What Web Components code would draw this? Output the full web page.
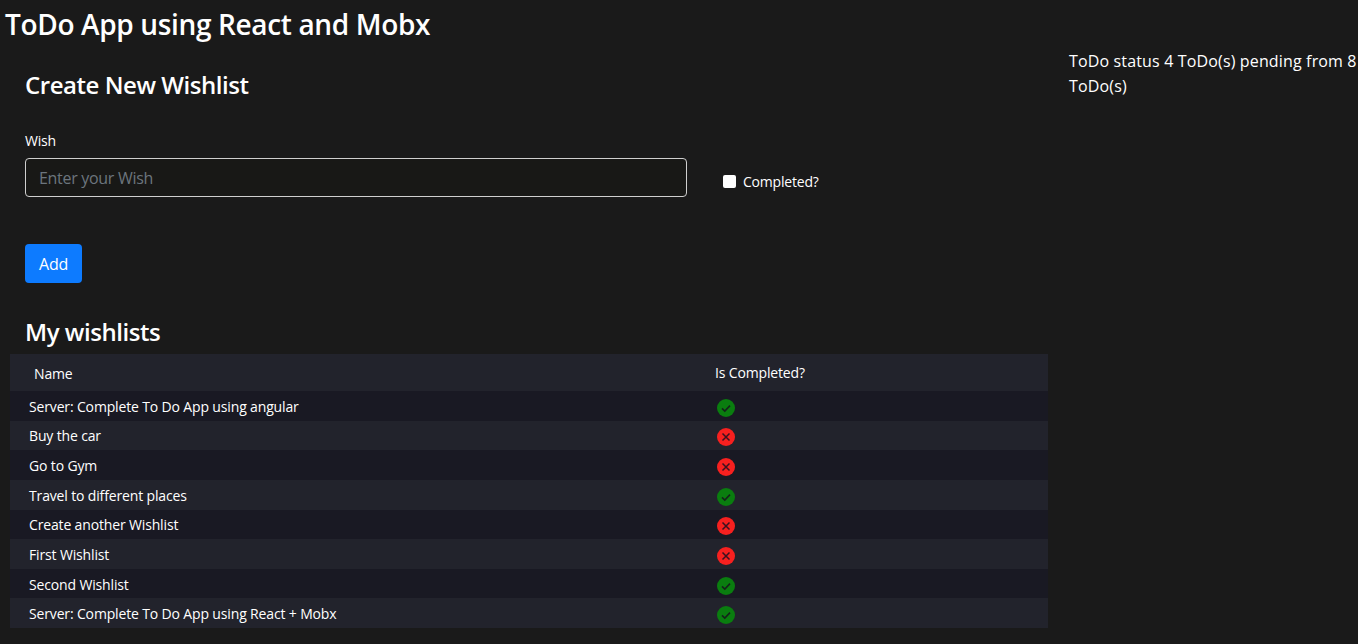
<!DOCTYPE html>
<html>
<head>
<meta charset="utf-8">
<title>ToDo App</title>
<style>
  html, body { margin: 0; height: 100%; background: #1a1a1a; }
  body { color: #fff; font-family: "Open Sans", "Noto Sans", sans-serif; overflow: hidden; }
</style>
</head>
<body>
<todo-app></todo-app>

<template id="todo-app-tpl">
  <style>
    :host { display: block; }
    h1 { margin: 0; padding: 5px 0 0 5px; height: 44px; font-size: 28px; line-height: 38px; font-weight: 600; letter-spacing: -0.35px; }
    .columns { display: grid; grid-template-columns: 1048px 1fr; column-gap: 21px; }
    .status { font-size: 16px; line-height: 25px; letter-spacing: 0.15px; }
    h2 { margin: 33px 0 6px 25px; font-size: 24px; line-height: 32px; font-weight: 600; letter-spacing: -0.45px; }
  </style>
  <h1>ToDo App using React and Mobx</h1>
  <div class="columns">
    <div>
      <wish-form></wish-form>
      <h2>My wishlists</h2>
      <wish-table></wish-table>
    </div>
    <div class="status">ToDo status 4 ToDo(s) pending from 8 ToDo(s)</div>
  </div>
</template>

<template id="wish-form-tpl">
  <style>
    :host { display: block; padding: 10px 0 0 25px; }
    h2 { margin: 0; padding-top: 10px; font-size: 24px; line-height: 32px; font-weight: 600; letter-spacing: -0.45px; }
    .row { display: flex; margin-top: 30px; align-items: flex-end; }
    label.wish { display: block; font-size: 14px; line-height: 19px; letter-spacing: -0.2px; margin-bottom: 8px; }
    input.text {
      display: block; box-sizing: border-box; width: 662px; height: 39px; padding: 0 13px;
      background: #181816; border: 1px solid #cfcfcf; border-radius: 4px; color: #fff;
      font: inherit; font-size: 16px; letter-spacing: -0.3px; outline: none;
    }
    input.text::placeholder { color: #6c757d; opacity: 1; }
    .check { display: flex; align-items: center; margin: 0 0 7px 36px; height: 18px; font-size: 14px; letter-spacing: -0.2px; }
    .box { width: 13px; height: 13px; background: #fff; border-radius: 2px; margin-right: 7px; }
    button {
      display: block; margin-top: 47px; width: 57px; height: 39px; padding: 0; border: 0; border-radius: 4px;
      background: #0d7bff; color: #fff; font: inherit; font-size: 16px; letter-spacing: -0.3px;
    }
  </style>
  <h2>Create New Wishlist</h2>
  <div class="row">
    <div>
      <label class="wish">Wish</label>
      <input class="text" type="text" placeholder="Enter your Wish">
    </div>
    <div class="check"><span class="box"></span>Completed?</div>
  </div>
  <button>Add</button>
</template>

<template id="wish-table-tpl">
  <style>
    :host { display: block; margin-left: 10px; font-size: 14px; letter-spacing: -0.15px; }
    .row { display: grid; grid-template-columns: 686px 1fr; height: 29.63px; align-items: center; background: #191923; }
    .row:nth-child(even) { background: #22232c; }
    .row.head { height: 37px; background: #22232c; }
    .row span:first-child { padding-left: 19px; padding-top: 1px; }
    .row.head span:first-child { padding-left: 24px; }
    .row span:last-child { padding-left: 19px; }
    svg { display: block; width: 18px; height: 18px; margin-left: 2px; margin-top: 4px; }
  </style>
  <div class="row head"><span>Name</span><span>Is Completed?</span></div>
  <div id="rows" style="display:contents"></div>
</template>

<script>
class TodoApp extends HTMLElement {
    constructor() {
        super();
        this.attachShadow({ mode: "open" });
        this.shadowRoot.appendChild(document.getElementById("todo-app-tpl").content.cloneNode(true));
    }
}

class WishForm extends HTMLElement {
    constructor() {
        super();
        this.attachShadow({ mode: "open" });
        this.shadowRoot.appendChild(document.getElementById("wish-form-tpl").content.cloneNode(true));
    }
}

const ICON_OK = '<svg viewBox="0 0 18 18"><circle cx="9" cy="9" r="9" fill="#0a7d0f"/><path d="M5 9.4l2.8 2.7L13 6.6" fill="none" stroke="#14241a" stroke-width="1.6"/></svg>';
const ICON_NO = '<svg viewBox="0 0 18 18"><circle cx="9" cy="9" r="9" fill="#f7201f"/><path d="M5.5 5.5l7 7M12.5 5.5l-7 7" fill="none" stroke="#3a1220" stroke-width="1.5"/></svg>';

const WISHES = [
    ["Server: Complete To Do App using angular", true],
    ["Buy the car", false],
    ["Go to Gym", false],
    ["Travel to different places", true],
    ["Create another Wishlist", false],
    ["First Wishlist", false],
    ["Second Wishlist", true],
    ["Server: Complete To Do App using React + Mobx", true],
];

class WishTable extends HTMLElement {
    constructor() {
        super();
        this.attachShadow({ mode: "open" });
        this.shadowRoot.appendChild(document.getElementById("wish-table-tpl").content.cloneNode(true));
        const rows = this.shadowRoot.getElementById("rows");
        WISHES.forEach(([name, done]) => {
            const row = document.createElement("div");
            row.className = "row";
            row.innerHTML = `<span>${name}</span><span>${done ? ICON_OK : ICON_NO}</span>`;
            rows.appendChild(row);
        });
    }
}

customElements.define("todo-app", TodoApp);
customElements.define("wish-form", WishForm);
customElements.define("wish-table", WishTable);
</script>
</body>
</html>
